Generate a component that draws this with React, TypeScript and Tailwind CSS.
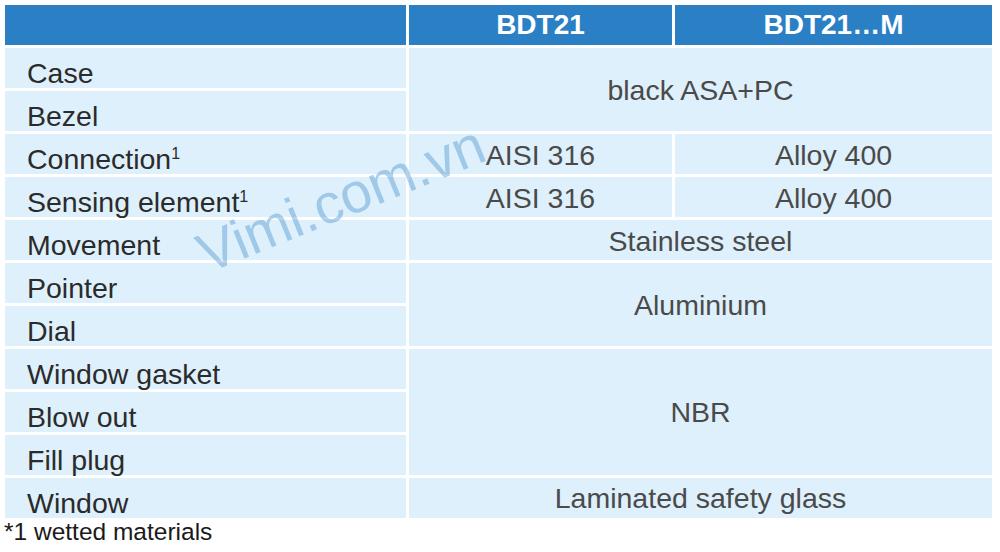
import React from "react";

const font = { fontFamily: '"Liberation Sans", Arial, sans-serif' };

function Label({ children }: { children: React.ReactNode }) {
  return (
    <div className="bg-[#def0fc] flex items-center pl-[22px] pt-[10px] text-[28.5px] leading-[28px] text-[#2b2b2b] whitespace-nowrap h-full">
      <span>{children}</span>
    </div>
  );
}

function Sup() {
  return <sup className="text-[16px] leading-[0] align-super top-0">1</sup>;
}

const val = "bg-[#def0fc] flex items-center justify-center text-[28.5px] text-[#4a4a4a]";

export default function App() {
  return (
    <div className="relative w-[1000px] h-[552px] bg-white overflow-hidden pt-[5px] pl-[5px]" style={font}>
      <div className="grid grid-cols-[401px_263px_317px] grid-rows-[repeat(12,40px)] gap-[3px]">
        {/* header */}
        <div className="bg-[#2a7fc5]" />
        <div className="bg-[#2a7fc5] flex items-center justify-center text-white font-bold text-[28px]">BDT21</div>
        <div className="bg-[#2a7fc5] flex items-center justify-center text-white font-bold text-[28px]">BDT21…M</div>

        {/* Case / Bezel */}
        <div className="col-start-1 row-start-2"><Label>Case</Label></div>
        <div className="col-start-1 row-start-3"><Label>Bezel</Label></div>
        <div className={`col-start-2 col-span-2 row-start-2 row-span-2 pt-[1px] ${val}`}>black ASA+PC</div>

        {/* Connection */}
        <div className="col-start-1 row-start-4"><Label>Connection<Sup /></Label></div>
        <div className={`col-start-2 row-start-4 pt-[3px] ${val}`}>AISI 316</div>
        <div className={`col-start-3 row-start-4 pt-[3px] ${val}`}>Alloy 400</div>

        {/* Sensing element */}
        <div className="col-start-1 row-start-5"><Label>Sensing element<Sup /></Label></div>
        <div className={`col-start-2 row-start-5 pt-[3px] ${val}`}>AISI 316</div>
        <div className={`col-start-3 row-start-5 pt-[3px] ${val}`}>Alloy 400</div>

        {/* Movement */}
        <div className="col-start-1 row-start-6"><Label>Movement</Label></div>
        <div className={`col-start-2 col-span-2 row-start-6 pt-[2px] ${val}`}>Stainless steel</div>

        {/* Pointer / Dial */}
        <div className="col-start-1 row-start-7"><Label>Pointer</Label></div>
        <div className="col-start-1 row-start-8"><Label>Dial</Label></div>
        <div className={`col-start-2 col-span-2 row-start-7 row-span-2 pt-[2px] ${val}`}>Aluminium</div>

        {/* Gasket / Blow out / Fill plug */}
        <div className="col-start-1 row-start-9"><Label>Window gasket</Label></div>
        <div className="col-start-1 row-start-10"><Label>Blow out</Label></div>
        <div className="col-start-1 row-start-11"><Label>Fill plug</Label></div>
        <div className={`col-start-2 col-span-2 row-start-9 row-span-3 pt-[1px] ${val}`}>NBR</div>

        {/* Window */}
        <div className="col-start-1 row-start-12"><Label>Window</Label></div>
        <div className={`col-start-2 col-span-2 row-start-12 pt-[1px] ${val}`}>Laminated safety glass</div>
      </div>

      <div className="text-[24.5px] leading-[28px] text-[#1a1a1a] -ml-[1px]">*1 wetted materials</div>

      {/* watermark */}
      <div className="pointer-events-none absolute left-[341px] top-[199px] -translate-x-1/2 -translate-y-1/2 -rotate-[22deg] text-[56px] leading-none whitespace-nowrap text-[#2a7fc5]/35">
        Vimi.com.vn
      </div>
    </div>
  );
}
